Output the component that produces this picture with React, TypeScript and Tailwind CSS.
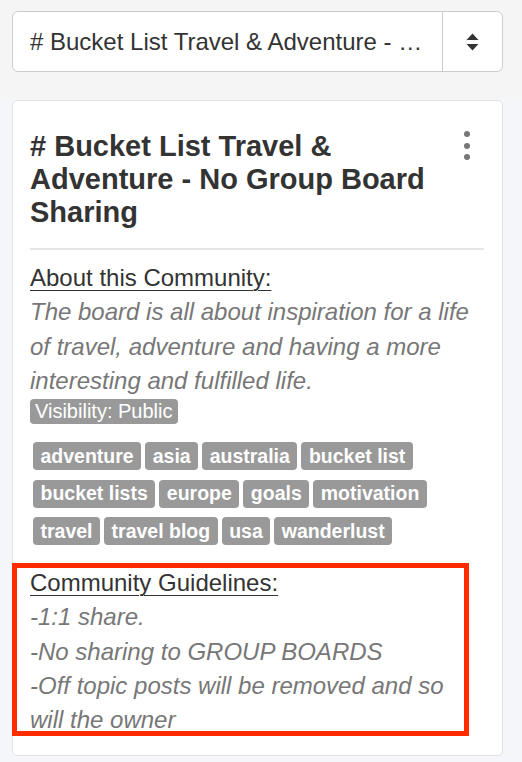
import React from "react";

const tags = [
  "adventure",
  "asia",
  "australia",
  "bucket list",
  "bucket lists",
  "europe",
  "goals",
  "motivation",
  "travel",
  "travel blog",
  "usa",
  "wanderlust",
];

const SortIcon = () => (
  <svg width="13" height="18" viewBox="0 0 13 18" fill="#333">
    <path d="M6.5 0.5 L12.5 7 L0.5 7 Z" />
    <path d="M0.5 11 L12.5 11 L6.5 17.5 Z" />
  </svg>
);

const App = () => {
  return (
    <div className="min-h-[762px] bg-[#f4f6f9] font-['Liberation_Sans',Arial,sans-serif]">
      {/* board picker */}
      <div className="bg-[#f5f5f5] h-[98px] pl-[12px] pr-[19px] pt-[11px]">
        <div className="flex h-[61px] bg-white border border-[#cccccc] rounded-[6px]">
          <div className="flex-1 min-w-0 flex items-center pl-[17px] pr-[10px]">
            <span className="truncate text-[24px] text-[#333]">
              # Bucket List Travel &amp; Adventure - No Group Board Sharing
            </span>
          </div>
          <div className="w-[60px] border-l border-[#cccccc] flex items-center justify-center">
            <SortIcon />
          </div>
        </div>
      </div>

      <div className="pl-[12px] pr-[19px] pt-[2px] pb-[10px]">
        <div className="relative bg-white border border-[#e3e3e3] rounded-[5px] pl-[17px] pr-[18px] pt-[29px] pb-[17px]">
          <div className="flex items-start justify-between">
            <h1 className="text-[29px] leading-[33px] font-bold text-[#333] pr-[24px]">
              # Bucket List Travel &amp; Adventure - No Group Board Sharing
            </h1>
            <div className="flex flex-col gap-[5.5px] mt-[1px] mr-[14px] shrink-0">
              <span className="w-[6px] h-[6px] rounded-full bg-[#777]" />
              <span className="w-[6px] h-[6px] rounded-full bg-[#777]" />
              <span className="w-[6px] h-[6px] rounded-full bg-[#777]" />
            </div>
          </div>

          <div className="mt-[19px] mb-[11px] border-t-2 border-[#e6e6e6]" />

          <div className="text-[24px] leading-[34.3px]">
            <p className="text-[#333] underline underline-offset-[4px] decoration-1">About this Community:</p>
            <p className="italic text-[#777]">
              The board is all about inspiration for a life of travel, adventure and having a more interesting and
              fulfilled life.
            </p>
          </div>
          <span className="inline-block mt-[1px] bg-[#999] text-white text-[20px] leading-[25px] pl-[5px] pr-[6px] rounded-[4px]">
            Visibility: Public
          </span>

          <div className="flex flex-wrap gap-x-[4px] gap-y-[9.5px] mt-[17px] pl-[3px]">
            {tags.map((t) => (
              <span
                key={t}
                className="h-[28px] flex items-center bg-[#999] text-white font-bold text-[19.5px] px-[7.5px] rounded-[4px]"
              >
                {t}
              </span>
            ))}
          </div>

          <div className="relative mt-[21px] text-[24px] leading-[34.3px]">
            <p className="text-[#333] underline underline-offset-[4px] decoration-1">Community Guidelines:</p>
            <div className="italic text-[#777] pr-[6px]">
              <p>-1:1 share.</p>
              <p>-No sharing to GROUP BOARDS</p>
              <p>-Off topic posts will be removed and so will the owner</p>
            </div>
            <div className="absolute left-[-18px] top-[-3px] w-[457px] h-[173px] border-[5px] border-[#fe2a00] pointer-events-none" />
          </div>
        </div>
      </div>
    </div>
  );
};

export default App;
